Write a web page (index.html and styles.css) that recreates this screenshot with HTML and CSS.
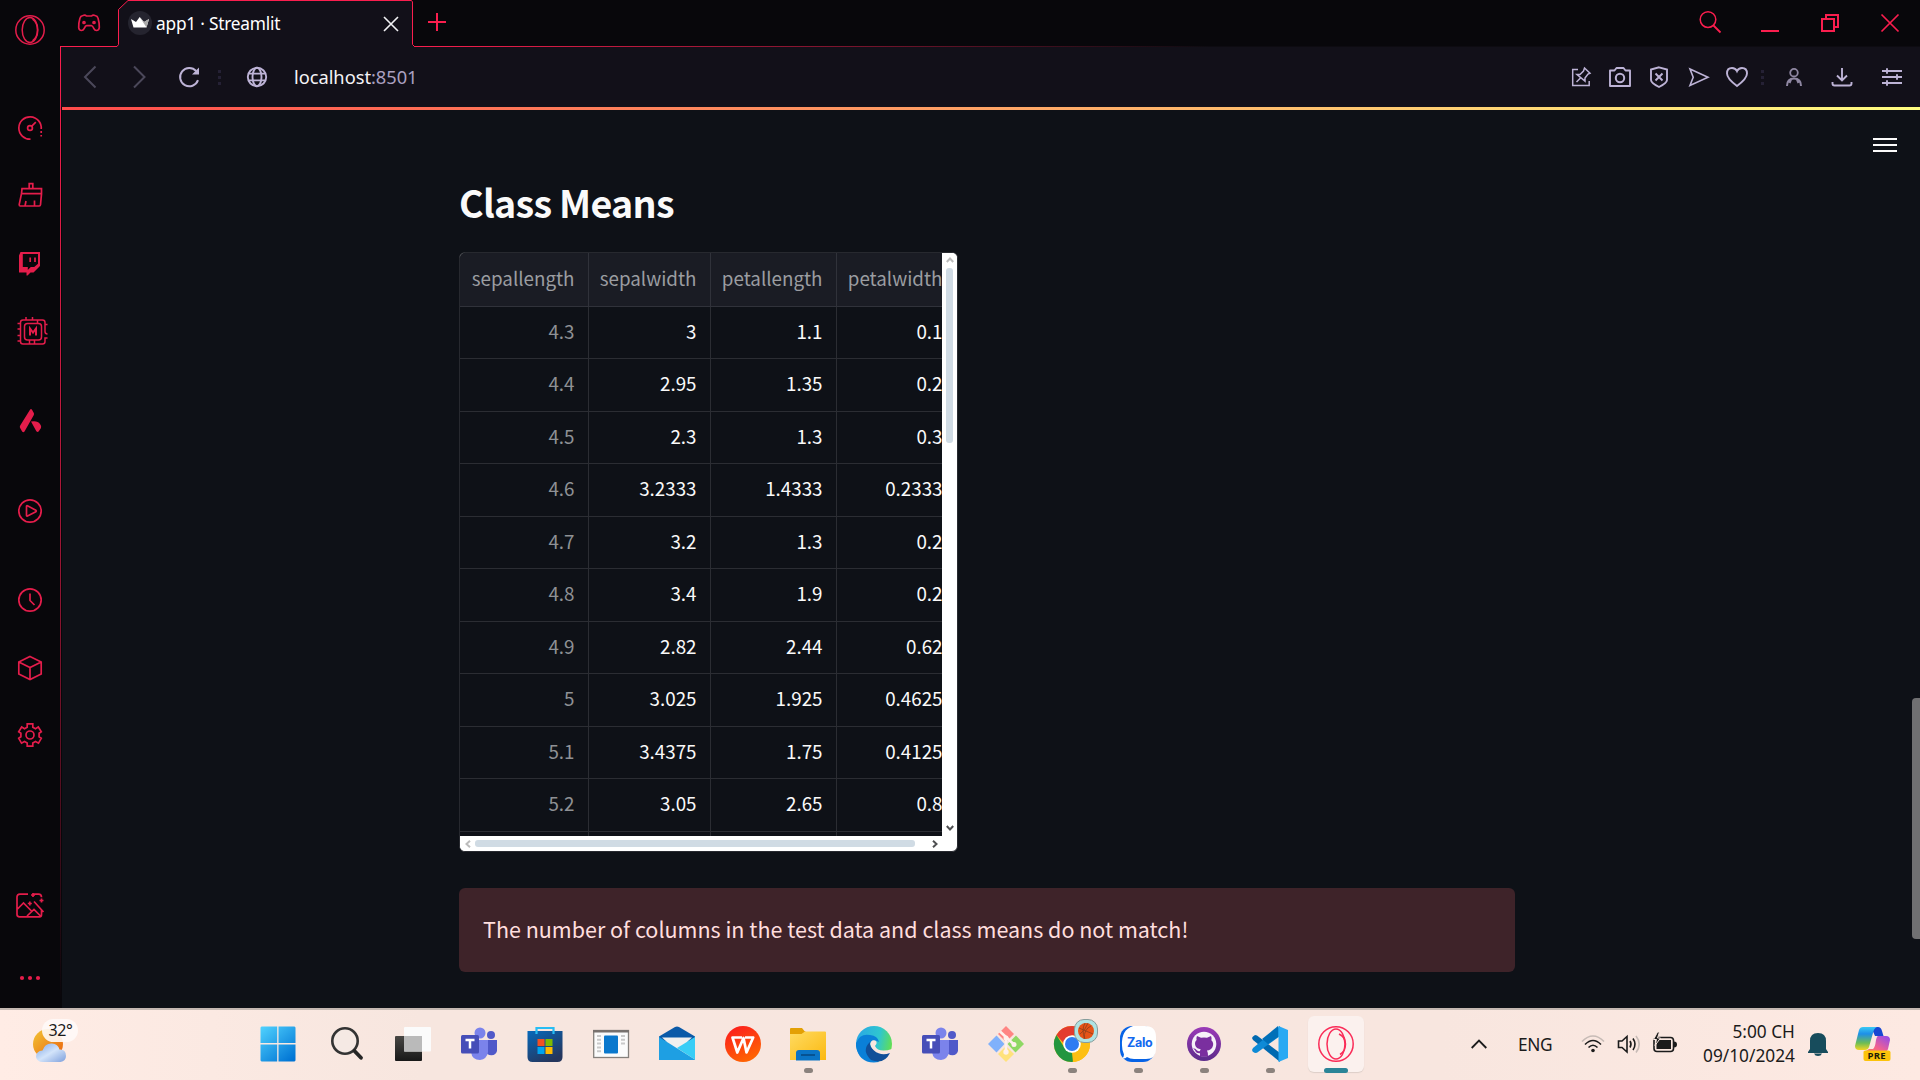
FILE: index.html
```html
<!DOCTYPE html>
<html lang="en">
<head>
<meta charset="utf-8">
<title>app1 · Streamlit</title>
<link rel="stylesheet" href="styles.css">
</head>
<body>
<div class="desktop">
  <div class="browser">
    <nav class="sidebar">
      <svg class="icon opera" viewBox="0 0 32 32"><circle cx="16" cy="16" r="14.2"/><ellipse cx="16" cy="16" rx="7.8" ry="12.6"/><path d="M18.5 5.2c6.600 4.500 6.600 17.200 0 21.700"/></svg>
      <div class="group g-apps">
        <svg class="icon" viewBox="0 0 32 32"><path d="M16.500 27.200A11.200 11.200 0 1 1 27.200 17M27.200 19v2M27.200 23v1.600"/><circle cx="16" cy="16" r="2.400"/><path d="M17.800 14.200l4-4"/></svg>
        <svg class="icon" viewBox="0 1 32 32"><path d="M15.200 9.600V4.600h3.600v5M8 9.600h19.500v5H7.500zM7.500 14.600L5.200 25.600q0 1.400 1 1.400h19q1.200 0 1.300-1.200l1-11M11 27l1-5M20.500 27v-5.500"/></svg>
        <svg class="icon" viewBox="0 1 32 32"><path class="fill" fill-rule="evenodd" d="M6.500 6H26V20L19.500 26.500h-3l-3 3h-1v-3H5V9.500zM8.800 8V21h5v3l3-3h3.400l3.800-3.300V8z"/><path d="M16.200 11.500v4.600M21 11.500v4.600"/></svg>
        <svg class="icon chip" viewBox="-1 0 32 32"><rect x="9.500" y="8.500" width="17" height="16.500" rx="3"/><path d="M30 10V7.500q0-2.500-2.500-2.500H8Q5.500 5 5.500 7.500V26.500q0 2.500 2.500 2.500h19.500q2.500 0 2.500-2.500v-3.500h2.500M30 9.500h2.500M30 10v6.500q0 2.500 2.500 2.500M11 5V2M17.500 5V2M5.500 8.500h-3M5.500 14h-3M5.500 20.500h-3M5.500 26h-3M14.500 25v3.500M19.500 25v3.500M22.500 5v3.500"/><path class="bold" d="M15 20.500v-7l3 4 3-4v7"/></svg>
      </div>
      <svg class="icon g-one" viewBox="0 0 32 32"><path class="fill" d="M16 4.800q1-1.500 2 0l1.800 3.200q.5 1-.1 2.200L10.500 26.500q-1 1.600-2.400 0L6 22.800q-.5-1 .2-2.200zM17 16.500q6.500-1.300 9 2.500 2 2.500 1 4l-2.400 3.600q-1.200 1.200-2.400-.5z"/></svg>
      <svg class="icon g-one" viewBox="0 0 32 32"><circle cx="16" cy="16" r="11.200"/><path d="M12.500 11.200q0-.8 1-.5l8.300 4.500q1 .8 0 1.600l-8.300 4.200q-1 .4-1-.5z"/></svg>
      <div class="group g-tools">
        <svg class="icon" viewBox="0 0 32 32"><circle cx="16" cy="16" r="11.200"/><path d="M16 9.500V16.500l4.500 4.500"/></svg>
        <svg class="icon" viewBox="0 0 32 32"><path d="M16 4.500L27.200 10v12L16 27.500 4.800 22V10zM4.800 10L16 15.500 27.200 10M16 15.500v12"/></svg>
        <svg class="icon" viewBox="0 0 32 32"><circle cx="16" cy="16" r="4"/><path d="M13.200 4.800h5.600v3.400l2.700 1.500 2.800-1.700 3 4.700-2.200 1.600v3.400l2.200 1.600-2.800 4.900-3-1.700-2.700 1.500v3.200h-5.600V24l-2.700-1.500-3 1.700-2.800-4.900 2.200-1.600v-3.400l-2.200-1.600 3-4.700 2.800 1.700 2.700-1.500z"/></svg>
      </div>
      <svg class="icon g-image" viewBox="0 0 32 32"><path d="M14 5.200H6Q3 5.200 3 8v17.500Q3 27.800 5.500 27.800h20q2 0 2-2V21M19.500 5.200h5q3 0 3 3M3 20.500l6.500-6.500 8 8M13 27l7-6.500 6.500 6.500M20 12.500l9.500 10.500M15.800 12.500v4M13.800 14.500h4M19 4v4M17 6h4M27.500 9.500v4M25.500 11.500h4"/></svg>
      <svg class="icon g-more" viewBox="0 0 32 32"><g class="fill"><circle cx="8" cy="16" r="2.100"/><circle cx="16" cy="16" r="2.100"/><circle cx="24" cy="16" r="2.100"/></g></svg>
    </nav>

    <div class="main">
      <svg class="frame" viewBox="0 0 1860 1008">
        <defs>
          <linearGradient id="fadeX" gradientUnits="userSpaceOnUse" x1="353" y1="0" x2="1150" y2="0"><stop offset="0" stop-color="#fa1e4e"/><stop offset="1" stop-color="#fa1e4e" stop-opacity="0"/></linearGradient>
          <linearGradient id="fadeY" gradientUnits="userSpaceOnUse" x1="0" y1="46" x2="0" y2="1000"><stop offset="0" stop-color="#fa1e4e"/><stop offset=".35" stop-color="#c41a40"/><stop offset="1" stop-color="#fa1e4e" stop-opacity="0"/></linearGradient>
        </defs>
        <path fill="#121019" d="M.5 46.500H57l1.500-2V9.500L68 .5H351.500l1 1.500V44.500l2 2H1860V107H.5z"/>
        <path fill="none" stroke="#fa1e4e" d="M.5 46.500H57l1.500-2V9.500L68 .5H351.500l1 1.500V44.500l2 2"/>
        <rect x="354" y="46" width="800" height="1" fill="url(#fadeX)"/>
        <rect x="0" y="46" width="1" height="960" fill="url(#fadeY)"/>
      </svg>

      <header class="tabs">
        <svg class="pad" viewBox="0 0 24 24"><path d="M6 4.500q2-1 3.500.5h5q1.500-1.500 3.500-.5 2.500.5 3 2.500 1.500 5 1.300 9.500-.3 3-2.800 3-1.800 0-2.600-1.800-1.400-3-2.400-3h-5q-1 0-2.400 3Q6.300 19.500 4.500 19.500q-2.500 0-2.800-3Q1.500 12 3 7 3.500 5 6 4.500z"/><circle cx="7" cy="11.500" r="1"/><circle cx="17" cy="11.500" r="1"/></svg>
        <div class="tab">
          <svg class="crown" viewBox="0 0 24 24"><circle cx="12" cy="12" r="12" fill="#25242f"/><path fill="#fff" d="M3 8l5 3 3.700-5L16 11l5-3-2.500 8.500h-13z"/><path fill="#aaa" d="M11.700 6L16 11l5-3-2.500 8.500z"/></svg>
          <span class="tab-title">app1 · Streamlit</span>
          <svg class="tab-close" viewBox="0 0 16 16"><path d="M1 1l14 14M15 1L1 15"/></svg>
        </div>
        <svg class="plus" viewBox="0 0 18 18"><path d="M9 0v18M0 9h18"/></svg>
        <div class="controls">
          <svg viewBox="0 0 24 24"><circle cx="10" cy="8.600" r="7.800" stroke-width="1.500"/><path stroke-width="1.800" d="M15.500 14.500l7 7"/></svg>
          <svg viewBox="0 0 24 24"><path stroke-width="2" d="M3 20h18"/></svg>
          <svg viewBox="0 0 24 24"><path stroke-width="2" d="M4 8h12v12H4zM8 8V4h12v12h-4"/></svg>
          <svg viewBox="0 0 24 24"><path stroke-width="1.700" d="M3.500 3.500l17 17M20.500 3.500l-17 17"/></svg>
        </div>
      </header>

      <div class="toolbar">
        <div class="nav">
          <svg class="dim" viewBox="0 0 24 24"><path d="M17.500 1.500L7 12l10.500 10.500"/></svg>
          <svg class="dim" viewBox="0 0 24 24"><path d="M6 1.500L16.500 12 6 22.500"/></svg>
          <svg viewBox="0 0 24 24"><path stroke-width="2" d="M21 15.200A9.200 9.200 0 1 1 19.200 6"/><path class="solid" d="M22 2.500V9.500H15z"/></svg>
          <i class="dots"></i>
          <svg viewBox="0 0 24 24"><g stroke-width="1.900"><circle cx="12" cy="12" r="9.200"/><ellipse cx="12" cy="12" rx="4.500" ry="9.200"/><path d="M4 8.600h16M4 15.400h16"/></g></svg>
          <span class="url">localhost<b>:8501</b></span>
        </div>
        <div class="tools">
          <svg viewBox="0 0 24 24"><path stroke-width="1.500" d="M9 4.500H3.700v16h16.500V16M15.500 3l5.500 5.300-2 .8-3 4v3L8 9.500h3l3.500-3.500zM11.500 13L7.500 17"/></svg>
          <svg viewBox="0 0 24 24"><path stroke-width="1.900" d="M2 5.500h4.500L8.500 3h7l2 2.500H22v15.500H2z" stroke-linejoin="round"/><circle cx="12" cy="13" r="4.200" stroke-width="2"/></svg>
          <svg viewBox="0 0 24 24"><path stroke-width="1.900" d="M12 2.300l8 2.200v10.500Q20 18 12 22 4 18 4 15V4.500zM8.500 8.500l7 7M15.500 8.500l-7 7"/></svg>
          <svg viewBox="0 0 24 24"><path stroke-width="1.600" d="M3 4l18 8.200L3 20.500l3.200-8.300z"/></svg>
          <svg viewBox="0 0 24 24"><path stroke-width="1.900" d="M12 21Q2 13.500 2 8.500 2 3 7 3q3.500 0 5 3.200Q13.500 3 17 3q5 0 5 5.500 0 5-10 12.500z"/></svg>
          <i class="dots"></i>
          <svg class="person" viewBox="0 0 24 24"><circle cx="12" cy="7.700" r="3.800" stroke-width="1.800"/><path stroke-width="2" d="M5 21q0-7.500 7-7.500t7 7.500M9 14.500L7.500 18M15 14.500l1.500 3.500"/></svg>
          <svg viewBox="0 0 24 24"><path stroke-width="1.900" d="M12 3v12M7 10.500l5 5 5-5M2.500 17v1.500q0 2 2 2h15q2 0 2-2V17"/></svg>
          <svg viewBox="0 0 24 24"><path stroke-width="1.900" d="M2 6h20M2 12h20M2 18h20M7 3.300v5.400M17 9.300v5.400M7 15.300v5.400"/></svg>
        </div>
      </div>

      <main class="page">
        <div class="menu"><i></i><i></i><i></i></div>
        <div class="scroll-thumb"></div>
        <section class="block">
          <h3 class="title">Class Means</h3>
          <div class="frame-table">
            <div class="grid">
              <div class="row head"><span>sepallength</span><span>sepalwidth</span><span>petallength</span><span>petalwidth</span></div>
              <div class="row"><span>4.3</span><span>3</span><span>1.1</span><span>0.1</span></div>
              <div class="row"><span>4.4</span><span>2.95</span><span>1.35</span><span>0.2</span></div>
              <div class="row"><span>4.5</span><span>2.3</span><span>1.3</span><span>0.3</span></div>
              <div class="row"><span>4.6</span><span>3.2333</span><span>1.4333</span><span>0.2333</span></div>
              <div class="row"><span>4.7</span><span>3.2</span><span>1.3</span><span>0.2</span></div>
              <div class="row"><span>4.8</span><span>3.4</span><span>1.9</span><span>0.2</span></div>
              <div class="row"><span>4.9</span><span>2.82</span><span>2.44</span><span>0.62</span></div>
              <div class="row"><span>5</span><span>3.025</span><span>1.925</span><span>0.4625</span></div>
              <div class="row"><span>5.1</span><span>3.4375</span><span>1.75</span><span>0.4125</span></div>
              <div class="row"><span>5.2</span><span>3.05</span><span>2.65</span><span>0.8</span></div>
              <div class="row"><span></span><span></span><span></span><span></span></div>
            </div>
            <div class="vbar">
              <svg class="off" viewBox="0 0 8 8"><path d="M.8 6L4 2.500 7.200 6"/></svg>
              <i class="vthumb"></i>
              <svg viewBox="0 0 8 8"><path d="M.8 2L4 5.500 7.200 2"/></svg>
            </div>
            <div class="hbar">
              <svg class="off" viewBox="0 0 8 8"><path d="M6 .8L2.500 4 6 7.200"/></svg>
              <i class="hthumb"></i>
              <svg viewBox="0 0 8 8"><path d="M2 .8L5.500 4 2 7.200"/></svg>
            </div>
          </div>
          <div class="alert">The number of columns in the test data and class means do not match!</div>
        </section>
      </main>
    </div>
  </div>

  <footer class="taskbar">
    <div class="weather">
      <svg viewBox="0 0 36 36"><defs><linearGradient id="sun" x1="0" y1="0" x2="1" y2="1"><stop offset="0" stop-color="#f2c534"/><stop offset="1" stop-color="#ea5f0c"/></linearGradient><linearGradient id="cloud" x1="0" y1="0" x2="1" y2="1"><stop offset="0" stop-color="#7ba4e6"/><stop offset=".5" stop-color="#d3e4fa"/><stop offset="1" stop-color="#7d9fdc"/></linearGradient></defs><circle cx="15" cy="18" r="15" fill="url(#sun)"/><path fill="url(#cloud)" d="M10 36q-6 0-7-5 0-6 6.500-6.500Q12 17 19 17.500q6 .5 7.500 6Q33 23 33 30q0 5-5.500 6z"/></svg>
      <span class="temp">32°</span>
    </div>

    <div class="apps">
      <div class="app"><svg class="start" viewBox="0 0 36 36"><defs><linearGradient id="win" gradientUnits="userSpaceOnUse" x1="0" y1="0" x2="30" y2="36"><stop offset="0" stop-color="#52d4ff"/><stop offset="1" stop-color="#0074d4"/></linearGradient></defs><path fill="url(#win)" d="M1.500.5H17.200V17H.5V1.500zM18.500.5H34.500l1 1V17h-17zM.5 18.500H17.200V35.500H1.500l-1-1zM18.500 18.500h17v16l-1 1h-16z"/></svg></div>
      <div class="app"><svg viewBox="0 0 36 36"><circle cx="16" cy="15" r="12.700" fill="#f5e9e4" stroke="#333" stroke-width="2.600"/><path stroke="#252525" stroke-width="3.800" stroke-linecap="round" d="M25.500 25l6.500 6.800"/></svg></div>
      <div class="app"><svg viewBox="0 0 36 36"><defs><linearGradient id="tv" x1="0" y1="0" x2="0" y2="1"><stop offset="0" stop-color="#484744"/><stop offset="1" stop-color="#181818"/></linearGradient></defs><rect y="10" width="27" height="25" rx="1" fill="url(#tv)"/><rect x="9" y="1" width="27" height="24.500" rx="1" fill="#fbfbfb"/><path fill="#bababa" d="M9 10h18v15.500H9z"/></svg></div>
      <div class="app"><svg viewBox="0 0 36 36"><g id="teams"><circle cx="19" cy="7" r="5.500" fill="#7b83eb"/><circle cx="30" cy="9" r="4" fill="#5059c9"/><path fill="#5059c9" d="M25 14h11v11q-1 4-5.500 4.300-5.500 0-5.500-5z"/><path fill="#7b83eb" d="M10 14h17v12q-1 7-8 8-8 0-9-8z"/><rect y="9" width="18" height="18.500" rx="1.500" fill="#464eb8"/><path fill="none" stroke="#fff" stroke-width="2.500" d="M4.500 14h9M9 13v9.500"/></g></svg></div>
      <div class="app"><svg viewBox="0 0 36 36"><defs><linearGradient id="store" x1="0" y1="0" x2=".6" y2="1"><stop offset="0" stop-color="#0669bb"/><stop offset="1" stop-color="#25365d"/></linearGradient></defs><path fill="url(#store)" d="M.5 5h35v26q0 5-5 5H5.500q-5 0-5-5z"/><path fill="none" stroke="#27bdf4" stroke-width="2.200" d="M9.500 8V2h17v6"/><path fill="#f25022" d="M10.500 13h7v7h-7z"/><path fill="#7fba00" d="M18.500 13h7v7h-7z"/><path fill="#00a4ef" d="M10.500 21h7v7h-7z"/><path fill="#ffb900" d="M18.500 21h7v7h-7z"/></svg></div>
      <div class="app"><svg viewBox="0 0 36 36"><rect x=".7" y="4.500" width="34.800" height="27" fill="#fbfbfb" stroke="#85807c" stroke-width="1.300"/><path fill="#77716e" d="M0 4h36v2.500H0z"/><rect x="11" y="9.500" width="14" height="18" rx="1" fill="#0a78cd"/><path stroke="#c9c9c9" stroke-width="4" stroke-dasharray="2 1.800" d="M6 9v17.500M30 9v10"/></svg></div>
      <div class="app"><svg viewBox="0 0 36 36"><path fill="#0b5aa8" d="M0 10.500L16 1q2-1 4 0l16 9.500v5H0z"/><path fill="#f1f0ef" d="M3 11.500h30L18 25z"/><path fill="#1e9fe3" d="M0 11l36 22.500V34H0z"/><path fill="#39cdf6" d="M36 11v22.500L18 22z"/></svg></div>
      <div class="app"><svg viewBox="0 0 36 36"><defs><linearGradient id="wps" x1="0" y1="0" x2=".5" y2="1"><stop offset="0" stop-color="#fb1720"/><stop offset="1" stop-color="#ff6203"/></linearGradient></defs><circle cx="18" cy="18" r="18" fill="url(#wps)"/><path fill="none" stroke="#fff" stroke-width="2.700" stroke-linejoin="round" d="M17 11.500H7.500l4.800 15L18.500 12l3 14.500 6.700-15H20"/></svg></div>
      <div class="app run"><svg viewBox="0 0 36 36"><defs><linearGradient id="fold" x1="0" y1="0" x2="1" y2="1"><stop offset="0" stop-color="#ffdb62"/><stop offset="1" stop-color="#fbb910"/></linearGradient></defs><path fill="#e3a005" d="M0 3q0-1 1-1h11q2 3 4 4v4H0z"/><path fill="url(#fold)" d="M0 8h11.500L15 5.500h20q1 0 1 1V34H0z"/><path fill="#0a74c6" d="M6 34.500V27q0-3 3-3h18q3 0 3 3v7.500z"/><path stroke="#064a86" stroke-width="1.600" d="M11 29h14"/></svg></div>
      <div class="app"><svg viewBox="0 0 36 36"><defs><linearGradient id="e1" x1="0" y1=".4" x2="1" y2=".6"><stop offset="0" stop-color="#2aa9e4"/><stop offset=".6" stop-color="#2fc6cf"/><stop offset="1" stop-color="#65e04c"/></linearGradient></defs><circle cx="18" cy="18" r="18" fill="url(#e1)"/><path fill="#0a80d8" d="M0 17Q4 7 14 9q8 1 9 7-8-4-9 3 0 9 9 17Q3 39 0 20z"/><path fill="#f8e6df" d="M14.200 18q1-5 5-3.500 3 2-.2 5.500 2 4.500 8.500 4.500 4.500 0 7.500-1.200l3 0v6q-4 3-9 3-11-.5-14.800-14.300z"/><path fill="#104f99" d="M14 16Q5 24 15 34q13 5 19-7-9 3.500-16-2.500-5-4-4-8.500z"/></svg></div>
      <div class="app"><svg viewBox="0 0 36 36"><use href="#teams"/></svg></div>
      <div class="app"><svg viewBox="0 0 36 36"><path fill="#ff8583" d="M18 0l8 8-8 8-8-8z"/><path fill="#8fd864" d="M28 9.500l8 8.500-8.500 8.500-8-8.500z"/><path fill="#ffe27c" d="M18 20l8 8-8 8-8-8z"/><path fill="#80b1fb" d="M8.500 9.500l8 8.500-8 8.500L0 18z"/><path fill="none" stroke="#fff1ec" stroke-width="2.600" d="M12 5.500l14 13M18 11v15"/><g fill="#fff1ec"><circle cx="18" cy="12" r="2.500"/><circle cx="26" cy="18.500" r="2.500"/><circle cx="18" cy="26" r="2.700"/></g></svg></div>
      <div class="app run"><svg viewBox="0 0 36 36"><circle cx="18" cy="18" r="18" fill="#fdbf13"/><path fill="#e33b2e" d="M2.400 9A18 18 0 0 1 33.600 9L18 9.500 13 21z"/><path fill="#23963f" d="M2.400 9L11 22.500 18 27l1 9A18 18 0 0 1 2.400 9z"/><path fill="#fdbf13" d="M33.600 9A18 18 0 0 1 18.500 36L26 22l-2-12z"/><circle cx="18" cy="18" r="8.800" fill="#fff"/><circle cx="18" cy="18" r="7" fill="#2e7bf2"/><rect x="20.500" y="-6.500" width="23" height="23" rx="9.500" fill="#aee3e3" stroke="#879c9b"/><circle cx="32" cy="5" r="8" fill="#e65317"/><path fill="none" stroke="#8a401d" stroke-width=".8" d="M25 2l14 6M31-3q-4 7 0 16M37 0q-7 3-7 13M26 8q5-3 8-11"/></svg></div>
      <div class="app run"><svg viewBox="0 0 36 36"><rect width="35" height="36" rx="12" fill="#0763e6"/><path fill="#fff" d="M13 0h12q11 0 11 11v12q0 10-10 10H14q-4 0-7-2-2 2-5 1.500 2-1.500 2-4-2-4-2-9Q1 4 13 0z"/><text x="7" y="21" class="zalo">Zalo</text></svg></div>
      <div class="app run"><svg viewBox="0 0 36 36"><defs><linearGradient id="gh" x1="0" y1="0" x2="0" y2="1"><stop offset="0" stop-color="#9a3ab7"/><stop offset="1" stop-color="#5c2c8b"/></linearGradient></defs><circle cx="18" cy="18" r="17" fill="url(#gh)"/><circle cx="18" cy="18" r="12.300" fill="#f6f2f8"/><path fill="#7a2f9f" d="M11 10l4 1.800q3-.6 6 0l4-1.800q1 2 .4 4.200 3 3 1 7-1.500 3-5.400 3.300 1 1.500 1 6h-8v-3.300q-4 .5-5-3-1-1-2-1.600 2-.6 3.300 1.200 1.500 2 3.700 1.100 0-1 .8-1.700-4-.5-5.300-3.200-1.500-3.500 1.100-6-.6-2 .4-4z"/></svg></div>
      <div class="app run"><svg viewBox="0 0 36 36"><path fill="#0069b0" d="M0 12q0-1 3-3l2 .5L28 27v9L1 14z"/><path fill="#0e8ad6" d="M0 24q0 2 3 3l2-.3L28 10V0L1 22z"/><path fill="#006fb8" d="M26 0v11l-10 7-6-5z"/><path fill="#29a9f3" d="M26.500 0L36 4v28l-9.500 4z"/></svg></div>
      <div class="app run active"><svg viewBox="0 0 36 36"><g fill="none" stroke="#fa2c58" stroke-width="1.500"><circle cx="18" cy="18" r="17.200"/><ellipse cx="18" cy="18" rx="9" ry="15"/><path d="M21 8q6.500 3 6.500 10T22 28.500"/></g></svg></div>
    </div>

    <div class="tray">
      <svg class="chev" viewBox="0 0 16 16"><path d="M.7 12L8 4.500l7.300 7.500"/></svg>
      <span class="lang">ENG</span>
      <svg class="net" viewBox="0 0 24 24"><path stroke="#c7bbb6" d="M1 9.500q11-11 22 0"/><path d="M4 12.500q8-8 16 0M7.500 15.500q4.500-4.500 9 0"/><circle cx="12" cy="18.500" r="1.800" fill="#1b1b1b" stroke="none"/></svg>
      <svg class="vol" viewBox="0 0 24 24"><path d="M1.500 9v6.500H5l5 4.500V4.500L5 9zM13 9q2 3.300 0 6.500M16 6.500q4 5.700 0 11.500"/><path stroke="#c7bbb6" d="M19 4q6.500 8.300 0 16.500"/></svg>
      <svg class="bat" viewBox="0 0 24 24"><rect x="1" y="5.500" width="19.500" height="14" rx="3"/><path fill="#1b1b1b" stroke="none" d="M3.500 8h14.500v9H3.500zM21 9.500q3 0 3 3t-3 3z"/><path fill="#1b1b1b" stroke="#f9e8e1" stroke-width="1" d="M4.500 0L.5 7.500h3L2 13.500 7.500 6h-3L6.500 0z"/></svg>
      <div class="clock"><span>5:00 CH</span><span>09/10/2024</span></div>
      <svg class="bell" viewBox="0 0 20 24"><path fill="#174c5c" d="M2 17V9q0-8 8-8t8 8v8l2 3v1H0v-1zM6 21.500h8q-1 2.500-4 2.500t-4-2.500z"/></svg>
      <svg class="copilot" viewBox="0 0 36 36"><defs><linearGradient id="c1" x1="0" y1="0" x2="0" y2="1"><stop offset="0" stop-color="#39c9f5"/><stop offset=".3" stop-color="#1d8fe8"/><stop offset=".7" stop-color="#6ebd54"/><stop offset="1" stop-color="#f4d523"/></linearGradient><linearGradient id="c2" x1="1" y1="0" x2="0" y2="1"><stop offset="0" stop-color="#8c49f1"/><stop offset=".6" stop-color="#f3628f"/><stop offset="1" stop-color="#fb8b50"/></linearGradient></defs><path fill="#1747d2" d="M16 1h7q3 0 4 4l1.500 5H20z"/><path fill="url(#c1)" d="M8 1h14q-3 1-4 6l-4 14q-1 3-4 3H4q-4 0-4-4L4 4q1-3 4-3z"/><path fill="url(#c2)" d="M23 10h8q4 0 4 4l-2 9q-1 3-4 3H8q4-1 6-3h4q2-1 3-9 1-4 2-4z"/><rect x="8.500" y="24.500" width="27" height="10.500" rx="2" fill="#fcc30b"/><text x="12.500" y="33.200" class="pre">PRE</text></svg>
    </div>
  </footer>
</div>
</body>
</html>
```
FILE: styles.css
```css
* { box-sizing: border-box; }
body { margin: 0; background: #08070b; overflow: hidden; }
svg { display: block; overflow: visible; flex: none; }

.desktop { width: 1920px; height: 1080px; display: flex; flex-direction: column; font-family: "Noto Sans", "Open Sans", sans-serif; }
.browser { height: 1008px; display: flex; }

/* Left browser rail */
.sidebar { width: 60px; background: #08070b; padding-top: 14px; display: flex; flex-direction: column; align-items: center; }
.icon { width: 32px; height: 32px; fill: none; stroke: #e41d4b; stroke-width: 1.7; }
.icon .fill { fill: #e41d4b; stroke: none; }
.icon .bold { stroke-width: 2; }
.chip { stroke-width: 1.5; }
.opera { stroke-width: 1.5; }
.group { display: flex; flex-direction: column; gap: 35.5px; }
.g-apps { margin-top: 66px; }
.g-one { margin-top: 58.3px; }
.g-tools { margin-top: 57px; }
.g-image { margin-top: 138px; }
.g-more { margin-top: 41px; }

/* Window chrome */
.main { position: relative; width: 1860px; display: flex; flex-direction: column; background: #08070b; }
.frame { position: absolute; left: 0; top: 0; width: 1860px; height: 1008px; pointer-events: none; }
.tabs { position: relative; height: 47px; display: flex; align-items: flex-start; }
.pad { width: 24px; height: 24px; margin: 11px 0 0 17px; fill: none; stroke: #e41d4b; stroke-width: 1.7; }
.tab { width: 293px; height: 46px; margin-left: 17px; padding-left: 10px; display: flex; align-items: center; }
.crown { width: 24px; height: 24px; }
.tab-title { width: 223px; margin-left: 4px; padding-top: 1px; color: #fff; font-size: 17.3px; line-height: 24px; letter-spacing: -.22px; white-space: nowrap; }
.tab-close { width: 16px; height: 16px; margin: 2px 0 0 4px; stroke: #f2f2f5; stroke-width: 1.6; }
.plus { width: 18px; height: 18px; margin: 13px 0 0 17px; stroke: #fa1e4e; stroke-width: 2; }
.controls { margin: 11px 0 0 auto; display: grid; grid-template-columns: repeat(4, 60px); justify-items: center; fill: none; stroke: #fa1e4e; }
.controls svg { width: 24px; height: 24px; }

.toolbar { position: relative; height: 60px; display: flex; justify-content: space-between; fill: none; stroke: #bdb3d6; }
.toolbar svg { width: 24px; height: 24px; }
.nav, .tools { display: grid; align-items: center; justify-items: center; }
.nav { padding-left: 5px; grid-template-columns: 50px 50px 48px 12px 64px auto; }
.tools { padding-right: 3px; grid-template-columns: 39px 39px 39px 40.5px 36px 14px 49px 48px 51px; }
.toolbar .dim { stroke: #4b485a; stroke-width: 2; }
.toolbar .person { stroke: #8f87a2; }
.toolbar .solid { fill: #bdb3d6; stroke: none; }
.dots { width: 3px; height: 15px; background: repeating-linear-gradient(#252135 0 3px, transparent 3px 6px); }
.url { margin-left: 5px; color: #f4f3f7; font-size: 18.3px; letter-spacing: -.03px; line-height: 24px; }
.url b { font-weight: 400; color: #aaa0c0; }

/* Page */
.page { position: relative; flex: 1; margin-left: 2px; background: #0e1117; border-top: 3px solid; border-image: linear-gradient(90deg, #ff4b4b, #fffd80) 1; font-family: "Noto Sans CJK SC", sans-serif; }
.menu { position: absolute; right: 23px; top: 28px; width: 24px; display: flex; flex-direction: column; gap: 4px; }
.menu i { height: 2px; background: #fafafa; }
.scroll-thumb { position: absolute; right: 0; top: 588px; width: 8px; height: 241px; border-radius: 4px 0 0 4px; background: #707072; }
.block { margin-left: 397px; width: 1056px; padding-top: 64px; }
.title { margin: 0 0 23px; height: 55px; line-height: 55px; font-size: 37.6px; font-weight: 700; letter-spacing: -.72px; color: #fafafa; }

.frame-table { width: 499px; height: 600px; border: 1px solid #27292f; border-radius: 6px; overflow: hidden; display: grid; grid-template-columns: 482px 15px; grid-template-rows: 583px 15px; background: #fff; }
.grid { overflow: hidden; background: #0e1117; }
.row { display: grid; grid-template-columns: 129px 122px 126px 120px; height: 52.5px; font-size: 18.8px; line-height: 48.6px; color: #fafafa; }
.row.head { height: 53.6px; line-height: 50px; }
.row span { border-right: 1px solid #2b2d33; border-bottom: 1px solid #2b2d33; padding-right: 13.5px; text-align: right; }
.row span:first-child { color: #8f9195; }
.row.head { background: #1a1c24; }
.row.head span { color: #9b9da1; border-color: #30323a; }
.vbar, .hbar { display: flex; align-items: center; background: #fff; fill: none; stroke: #4f5052; stroke-width: 2; }
.vbar svg, .hbar svg { width: 8px; height: 8px; }
.vbar { flex-direction: column; padding: 3px 0 4px; }
.hbar { padding: 0 3px 0 4px; }
.off { stroke: #bcbcbc; }
.vthumb { width: 7px; height: 175px; margin: 4px 0 auto; border-radius: 3px; background: #d0dbe4; }
.hthumb { width: 440px; height: 7px; margin: 0 auto 0 3px; border-radius: 3px; background: #d0dbe4; }

.alert { margin-top: 36px; height: 84px; line-height: 82px; padding-left: 24px; border-radius: 6px; background: #3e2329; color: #ffdede; font-size: 21.5px; white-space: nowrap; }

/* Taskbar */
.taskbar { height: 72px; border-top: 2px solid #c5b8b2; background: linear-gradient(90deg, #ffece5, #f7e6df 22%, #f8e6df 75%, #fde9e2); display: flex; }
.weather { position: relative; width: 248px; padding: 16px 0 0 33px; flex: none; }
.weather svg { width: 36px; height: 36px; }
.temp { position: absolute; left: 42px; top: 9px; width: 36px; height: 23px; border-radius: 12px; background: rgba(255,250,247,.9); color: #1b1b1b; font-size: 16px; line-height: 22px; padding-left: 6.5px; letter-spacing: -.4px; }
.apps { display: grid; grid-template-columns: repeat(17, 65.95px); }
.app { position: relative; height: 56px; margin: 6px 5px 0; border-radius: 6px; display: flex; justify-content: center; padding-top: 10px; }
.app svg { width: 36px; height: 36px; }
.app .start { margin-left: -5px; }
.run::after { content: ""; position: absolute; bottom: -1px; left: 23.5px; width: 9px; height: 5px; border-radius: 3px; background: #8b827d; }
.active { background: #fbf1ee; box-shadow: 0 1px 1px #dccec8; }
.active::after { left: 16px; width: 24px; background: #2a8497; }
.zalo { font: 700 12.5px "Inter", sans-serif; fill: #1268ef; letter-spacing: -.3px; }

.tray { position: relative; flex: 1; display: flex; align-items: center; padding: 0 29px 2px 102px; fill: none; stroke: #1b1b1b; stroke-width: 1.6; color: #1b1b1b; }
.chev { width: 16px; height: 16px; stroke-width: 1.8; }
.lang { width: 63px; padding-left: 31px; box-sizing: content-box; font-size: 17.3px; letter-spacing: -.4px; }
.net, .vol, .bat { width: 24px; height: 24px; margin-right: 12px; }
.clock { width: 106px; display: flex; flex-direction: column; align-items: flex-end; font-size: 17.3px; line-height: 24px; letter-spacing: 0; white-space: nowrap; }
.bell { width: 20px; height: 24px; margin-left: 13px; stroke: none; }
.copilot { width: 36px; height: 36px; margin-left: 27px; stroke: none; }
.pre { font: 700 9.5px "Open Sans", sans-serif; fill: #201a08; letter-spacing: .3px; }
```
